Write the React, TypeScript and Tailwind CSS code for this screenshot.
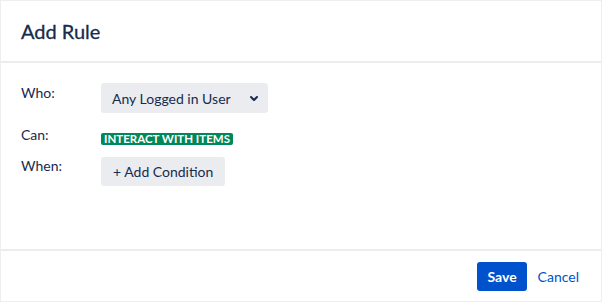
import React from "react";

function Chevron() {
  return (
    <svg width="24" height="24" viewBox="0 0 24 24" className="shrink-0">
      <path
        fill="#172b4d"
        d="M8.292 10.293a1.009 1.009 0 0 0 0 1.419l2.939 2.965c.218.215.5.322.779.322s.556-.107.769-.322l2.93-2.955a1.01 1.01 0 0 0 0-1.419.987.987 0 0 0-1.406 0l-2.298 2.317-2.307-2.327a.99.99 0 0 0-1.406 0z"
      />
    </svg>
  );
}

export default function App() {
  return (
    <div
      className="w-[602px] h-[302px] border border-[#eeeef0] bg-white flex flex-col text-[#172b4d]"
      style={{ fontFamily: "Lato, 'Noto Sans', sans-serif" }}
    >
      <div className="h-[60px] shrink-0 flex items-center px-5">
        <h1 className="text-[20px] leading-[24px] font-normal [-webkit-text-stroke:0.3px_#172b4d]">Add Rule</h1>
      </div>
      <div className="h-[2px] shrink-0 bg-[#ebecf0]" />
      <div className="flex-1 flex flex-col px-5 pt-5">
        <div className="flex items-start">
          <div className="w-[80px] shrink-0 text-[14px] leading-[20px]">Who:</div>
          <button className="h-[30px] flex items-center pl-[11px] pr-[2px] gap-[11px] rounded-[3px] bg-[#ebecf0] text-[14px]">
            <span>Any Logged in User</span>
            <Chevron />
          </button>
        </div>
        <div className="flex items-start mt-[12px]">
          <div className="w-[80px] shrink-0 text-[14px] leading-[20px]">Can:</div>
          <span className="mt-[8px] h-[12px] flex items-center px-[3px] rounded-[2px] bg-[#00875a] text-white text-[11.5px] font-bold leading-none uppercase">
            Interact with items
          </span>
        </div>
        <div className="flex items-start mt-[11px]">
          <div className="w-[80px] shrink-0 text-[14px] leading-[20px]">When:</div>
          <button className="mt-[1px] h-[29px] flex items-center px-[12px] rounded-[3px] bg-[#ebecf0] text-[14px]">
            + Add Condition
          </button>
        </div>
      </div>
      <div className="h-[2px] shrink-0 bg-[#ebecf0]" />
      <div className="h-[50px] shrink-0 flex items-center justify-end pr-[22px]">
        <button className="h-[29px] px-[10px] rounded-[3px] bg-[#0052cc] text-white text-[14px] font-bold">
          Save
        </button>
        <button className="ml-[11px] text-[14px] text-[#0052cc]">Cancel</button>
      </div>
    </div>
  );
}
